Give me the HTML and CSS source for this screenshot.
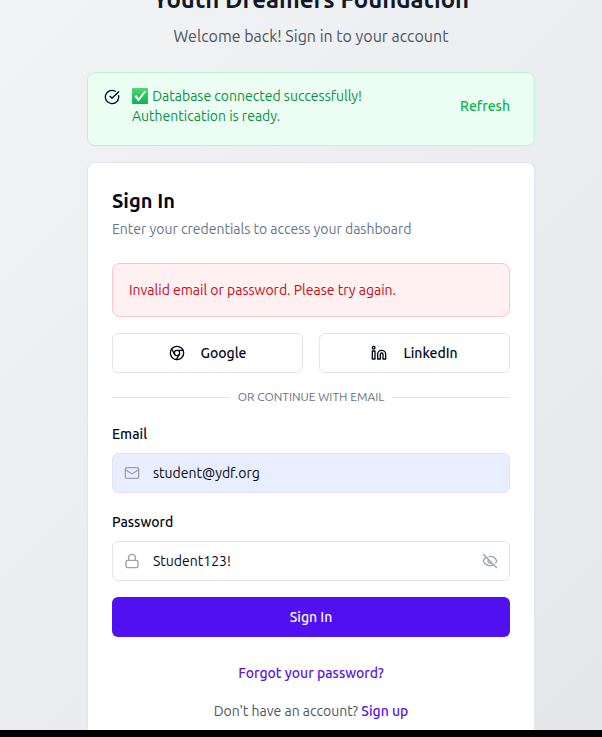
FILE: index.html
```html
<!DOCTYPE html>
<html lang="en">
<head>
<meta charset="utf-8">
<meta name="viewport" content="width=device-width, initial-scale=1">
<title>Youth Dreamers Foundation – Sign In</title>
<link rel="stylesheet" href="styles.css">
</head>
<body>
<main class="page">
  <div class="column">
    <header class="intro">
      <h1>Youth Dreamers Foundation</h1>
      <p>Welcome back! Sign in to your account</p>
    </header>

    <section class="notice" role="status">
      <svg class="icon notice-icon" viewBox="0 0 24 24" aria-hidden="true"><path d="M21.8 10A10 10 0 1 1 17 3.34"/><path d="m9 11 3 3L22 4"/></svg>
      <p class="notice-text">
        <svg class="tick" viewBox="0 0 16 16" aria-hidden="true">
          <defs><linearGradient id="green" x1="0" y1="0" x2="0" y2="1"><stop offset="0" stop-color="#5bd37b"/><stop offset="1" stop-color="#00b84c"/></linearGradient></defs>
          <rect width="16" height="16" rx="1" fill="url(#green)"/>
          <path d="M2.3 8.2 4.4 7l2.2 3.1 6-7.4 1.5.8-7.1 9.8H6z" fill="#eef1ee"/>
        </svg>
        Database connected successfully!<br>Authentication is ready.
      </p>
      <button type="button" class="refresh">Refresh</button>
    </section>

    <section class="card">
      <h2>Sign In</h2>
      <p class="lead">Enter your credentials to access your dashboard</p>

      <p class="error" role="alert">Invalid email or password. Please try again.</p>

      <div class="providers">
        <button type="button" class="provider">
          <svg class="icon" viewBox="0 0 24 24" aria-hidden="true"><circle cx="12" cy="12" r="10"/><circle cx="12" cy="12" r="4"/><path d="M21.17 8H12M3.95 6.06 8.54 14M10.88 21.94 15.46 14"/></svg>
          Google
        </button>
        <button type="button" class="provider">
          <svg class="icon" viewBox="0 0 24 24" aria-hidden="true"><path d="M16 8a6 6 0 0 1 6 6v7h-4v-7a2 2 0 0 0-4 0v7h-4v-7a6 6 0 0 1 6-6z"/><rect x="2" y="9" width="4" height="12"/><circle cx="4" cy="4" r="2"/></svg>
          LinkedIn
        </button>
      </div>

      <div class="divider"><span>OR CONTINUE WITH EMAIL</span></div>

      <form>
        <div class="field">
          <label for="email">Email</label>
          <div class="control filled">
            <svg class="icon" viewBox="0 0 24 24" aria-hidden="true"><rect x="2" y="4" width="20" height="16" rx="2"/><path d="m22 7-8.97 5.7a1.94 1.94 0 0 1-2.06 0L2 7"/></svg>
            <input id="email" type="email" value="student@ydf.org">
          </div>
        </div>
        <div class="field">
          <label for="password">Password</label>
          <div class="control">
            <svg class="icon" viewBox="0 0 24 24" aria-hidden="true"><rect x="3" y="11" width="18" height="11" rx="2"/><path d="M7 11V7a5 5 0 0 1 10 0v4"/></svg>
            <input id="password" type="text" value="Student123!">
            <button type="button" class="reveal" aria-label="Hide password">
              <svg class="icon" viewBox="0 0 24 24" aria-hidden="true"><path d="M10.733 5.076a10.744 10.744 0 0 1 11.205 6.575 1 1 0 0 1 0 .696 10.747 10.747 0 0 1-1.444 2.49"/><path d="M14.084 14.158a3 3 0 0 1-4.242-4.242"/><path d="M17.479 17.499a10.75 10.75 0 0 1-15.417-5.151 1 1 0 0 1 0-.696 10.75 10.75 0 0 1 4.446-5.143"/><path d="m2 2 20 20"/></svg>
            </button>
          </div>
        </div>
        <button type="submit" class="submit">Sign In</button>
      </form>

      <div class="links">
        <a href="#forgot">Forgot your password?</a>
        <p>Don't have an account? <a href="#signup">Sign up</a></p>
      </div>
    </section>
  </div>
</main>
<footer class="edge"></footer>
</body>
</html>
```
FILE: styles.css
```css
* { box-sizing: border-box; }

body {
  margin: 0;
  height: 100vh;
  display: flex;
  flex-direction: column;
  overflow: hidden;
  font-family: Ubuntu, Roboto, "Noto Sans", sans-serif;
  font-size: 14px;
  line-height: 20px;
  color: #020817;
}

h1, h2, p { margin: 0; }

button, input { font: inherit; color: inherit; }
button { cursor: pointer; }

a { color: #5b12e8; font-weight: 500; text-decoration: none; }

.page {
  flex: 1;
  min-height: 0;
  overflow: hidden;
  padding: 0 67px 0 87px;
  background: linear-gradient(135deg, #f2f3f5, #e5e7eb);
}

.edge { height: 7px; background: #000; }

.column { max-width: 448px; margin: -16px auto 0; }

.icon {
  width: 16px;
  height: 16px;
  flex: none;
  display: block;
  fill: none;
  stroke: currentColor;
  stroke-width: 2;
  stroke-linecap: round;
  stroke-linejoin: round;
}

.intro { text-align: center; margin-bottom: 24px; }
.intro h1 { font-size: 24px; line-height: 32px; font-weight: 700; color: #111827; margin-bottom: 8px; }
.intro p { font-size: 16px; line-height: 24px; color: #4b5563; }

.notice {
  display: flex;
  align-items: center;
  gap: 12px;
  padding: 13px 24px 19px 16px;
  margin-bottom: 16px;
  border: 1px solid #b0fccd;
  border-radius: 8px;
  background: #ecfef3;
}
.notice-icon { align-self: flex-start; margin-top: 3px; }
.notice-text { flex: 1; color: #069140; }
.tick { width: 16px; height: 16px; margin-right: 1px; vertical-align: -3px; }
.refresh { border: 0; padding: 0; background: none; color: #0ab64c; font-weight: 500; }

.card {
  padding: 24px;
  border: 1px solid #e2e4ef;
  border-radius: 8px;
  background: #fff;
  box-shadow: 0 1px 2px rgba(0, 0, 0, 0.05);
}
.card h2 { font-size: 20px; line-height: 28px; font-weight: 700; margin-bottom: 4px; }
.lead { color: #64748b; margin-bottom: 24px; }

.error {
  padding: 16px;
  margin-bottom: 16px;
  border: 1px solid #fcc5c8;
  border-radius: 8px;
  background: #fff0f1;
  color: #c70b15;
}

.providers { display: grid; grid-template-columns: 1fr 1fr; gap: 16px; margin-bottom: 16px; }
.provider {
  display: flex;
  align-items: center;
  justify-content: center;
  gap: 16px;
  height: 40px;
  padding: 0 16px;
  border: 1px solid #e2e5f1;
  border-radius: 6px;
  background: #fff;
  font-weight: 500;
}

.divider {
  display: flex;
  align-items: center;
  gap: 8px;
  margin-bottom: 20px;
  font-size: 12px;
  line-height: 16px;
  color: #6b7280;
}
.divider::before, .divider::after { content: ""; flex: 1; height: 1px; background: #e2e5f1; }

.field { margin-bottom: 20px; }
.field:nth-of-type(2) { margin-bottom: 16px; }
.field label { display: block; line-height: 18px; margin-bottom: 10px; font-weight: 500; }

.control {
  display: flex;
  align-items: center;
  gap: 13px;
  height: 40px;
  padding: 0 11px;
  border: 1px solid #e2e5f1;
  border-radius: 6px;
  background: #fff;
  color: #9ca3af;
}
.control.filled { background: #e8eefe; }
.control input {
  flex: 1;
  min-width: 0;
  height: 100%;
  padding: 0;
  border: 0;
  outline: 0;
  background: none;
  color: #020817;
}
.reveal { border: 0; padding: 0; background: none; color: #9ca3af; }

.submit {
  width: 100%;
  height: 40px;
  border: 0;
  border-radius: 6px;
  background: #5010f0;
  color: #f8fafc;
  font-weight: 500;
}

.links {
  display: flex;
  flex-direction: column;
  align-items: center;
  gap: 18px;
  margin-top: 26px;
  color: #4b5563;
}
```
